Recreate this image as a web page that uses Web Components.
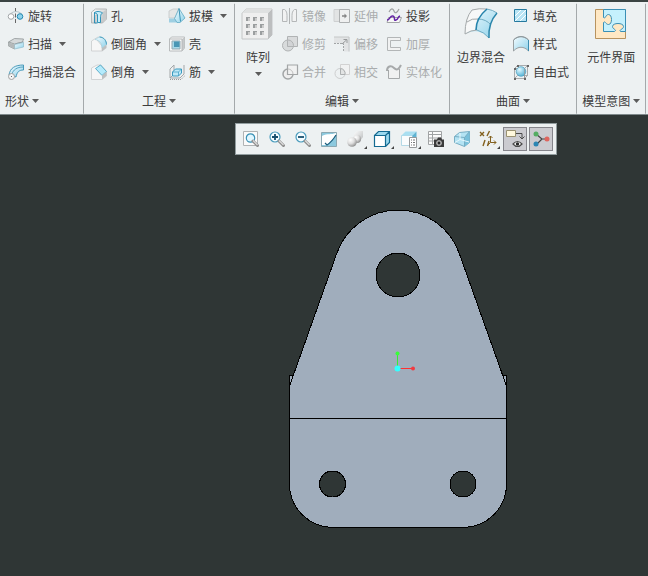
<!DOCTYPE html>
<html lang="zh-CN">
<head>
<meta charset="utf-8">
<title>零件</title>
<style>
    html, body { height: 100%; }
    body {
        margin: 0;
        display: flex;
        flex-direction: column;
        overflow: hidden;
        background: #2f3635;
        color: #3c3c3c;
        font: 12px/16px "Noto Sans CJK SC", sans-serif;
    }
</style>
</head>
<body>
<cad-ribbon>
    <ribbon-group label="形状" align="start">
        <ribbon-column>
            <ribbon-tool icon="revolve">旋转</ribbon-tool>
            <ribbon-tool icon="sweep" menu>扫描</ribbon-tool>
            <ribbon-tool icon="sweptblend">扫描混合</ribbon-tool>
        </ribbon-column>
    </ribbon-group>
    <ribbon-group label="工程">
        <ribbon-column>
            <ribbon-tool icon="hole">孔</ribbon-tool>
            <ribbon-tool icon="round" menu>倒圆角</ribbon-tool>
            <ribbon-tool icon="chamfer" menu>倒角</ribbon-tool>
        </ribbon-column>
        <ribbon-column>
            <ribbon-tool icon="draft" menu>拔模</ribbon-tool>
            <ribbon-tool icon="shell">壳</ribbon-tool>
            <ribbon-tool icon="rib" menu>筋</ribbon-tool>
        </ribbon-column>
    </ribbon-group>
    <ribbon-group label="编辑">
        <ribbon-tool icon="pattern" large menu>阵列</ribbon-tool>
        <ribbon-column>
            <ribbon-tool icon="mirror" disabled>镜像</ribbon-tool>
            <ribbon-tool icon="trim" disabled>修剪</ribbon-tool>
            <ribbon-tool icon="merge" disabled>合并</ribbon-tool>
        </ribbon-column>
        <ribbon-column>
            <ribbon-tool icon="extend" disabled>延伸</ribbon-tool>
            <ribbon-tool icon="offset" disabled>偏移</ribbon-tool>
            <ribbon-tool icon="intersect" disabled>相交</ribbon-tool>
        </ribbon-column>
        <ribbon-column>
            <ribbon-tool icon="project">投影</ribbon-tool>
            <ribbon-tool icon="thicken" disabled>加厚</ribbon-tool>
            <ribbon-tool icon="solidify" disabled>实体化</ribbon-tool>
        </ribbon-column>
    </ribbon-group>
    <ribbon-group label="曲面">
        <ribbon-tool icon="boundary" large>边界混合</ribbon-tool>
        <ribbon-column>
            <ribbon-tool icon="fill">填充</ribbon-tool>
            <ribbon-tool icon="style">样式</ribbon-tool>
            <ribbon-tool icon="freestyle">自由式</ribbon-tool>
        </ribbon-column>
    </ribbon-group>
    <ribbon-group label="模型意图">
        <ribbon-tool icon="component" large>元件界面</ribbon-tool>
    </ribbon-group>
</cad-ribbon>

<graphics-area>
    <view-toolbar slot="toolbar">
        <view-button icon="refit" label="重新调整"></view-button>
        <view-button icon="zoomin" label="放大"></view-button>
        <view-button icon="zoomout" label="缩小"></view-button>
        <view-button icon="repaint" label="重画"></view-button>
        <view-button icon="render" label="渲染选项" menu></view-button>
        <view-button icon="shading" label="显示样式" menu></view-button>
        <view-button icon="saved" label="已保存方向" menu></view-button>
        <view-button icon="manager" label="视图管理器"></view-button>
        <view-button icon="perspective" label="透视图"></view-button>
        <view-button icon="datum" label="基准显示过滤器" menu></view-button>
        <view-button icon="annotation" label="注释显示" pressed></view-button>
        <view-button icon="spin" label="旋转中心" pressed></view-button>
    </view-toolbar>
    <part-model></part-model>
</graphics-area>

<script>
// gradients shared by the icons; every icon svg carries its own copy
const DEFS = `
    <defs>
        <linearGradient id="b" x1="0" y1="0" x2="1" y2="1"><stop offset="0" stop-color="#f4fcff"/><stop offset="1" stop-color="#8fd2ea"/></linearGradient>
        <linearGradient id="g" x1="0" y1="0" x2="1" y2="1"><stop offset="0" stop-color="#fdfdfd"/><stop offset="1" stop-color="#b9bcbd"/></linearGradient>
        <radialGradient id="s" cx=".35" cy=".3" r=".75"><stop offset="0" stop-color="#fff"/><stop offset=".5" stop-color="#dedede"/><stop offset="1" stop-color="#8c8c8c"/></radialGradient>
        <radialGradient id="t" cx=".35" cy=".3" r=".75"><stop offset="0" stop-color="#e4f9ff"/><stop offset="1" stop-color="#4fb0d4"/></radialGradient>
    </defs>`;

const LENS = `<path d="M10 10l4.500 4.500" stroke="#8c8c8c" stroke-width="3" stroke-linecap="round"/><path d="M10 9.500l4.500 4.500" stroke="#dedede" stroke-width="1.200"/>`;

const ICONS = {
    revolve: `<path d="M7.500 0v16" stroke="#666" stroke-dasharray="4 1.500"/><path d="M2 6Q8 1 14 6" fill="none" stroke="#b9c6cb"/><circle cx="3" cy="8.500" r="2.800" fill="#fff" stroke="#a2a6a8"/><circle cx="12" cy="8.500" r="2.800" fill="#8fd3ec" stroke="#2589b0"/>`,
    sweep: `<path d="M.5 6l6-3.500 9 .5-1 3-6 1.500L6.500 9v4l-6-3z" fill="#d5d9da" stroke="#8f9597" stroke-width=".8"/><path d="M.5 6l6 2 9-2" fill="none" stroke="#8f9597" stroke-width=".8"/><path d="M6.500 8.500l9-2V11l-9 2z" fill="url(#b)" stroke="#8fbccc" stroke-width=".7"/><path d="M.5 6.500l6 2V13l-6-3z" fill="#b4b9ba"/>`,
    sweptblend: `<path d="M1 11C2 4 7 1 15.500 1v5C11 6 9 8 8 13z" fill="url(#b)" stroke="#3a91b3" stroke-width=".9"/><path d="M4 10C5 6 9 3 15 3" fill="none" stroke="#3a91b3" stroke-width=".8"/><circle cx="3.500" cy="12.500" r="3" fill="#f5f5f5" stroke="#a2a2a2"/><path d="M3 12.500h1" stroke="#666"/>`,
    hole: `<path d="M.5 4l4-3h11v10l-4 4h-3V7H5v8H.5z" fill="url(#g)" stroke="#a8acad" stroke-width=".8"/><path d="M11.500 4.500l4-3v10l-4 3z" fill="#c7cacb"/><path d="M3 5c2-2 6-2 8.500 0-2 1-2 2-2 9.500h-3V7c0-1-1-2-3.500-2z" fill="#c8eefa" stroke="#1f8ab4" stroke-width=".9"/><path d="M3.500 5v10h3" fill="none" stroke="#1f8ab4" stroke-width=".9"/>`,
    round: `<path d="M.5 5L7 1l4 1-5 2 5 6v5H.5z" fill="#f6f6f6" stroke="#c9cccd" stroke-width=".8"/><path d="M4 3.500L8.500 1c4.500 0 7 4 7 7.500L11 12c0-5-3-8-7-8.500z" fill="url(#b)" stroke="#9ccbdc" stroke-width=".6"/><path d="M8.500 1c4.500 0 7 4 7 7.500" fill="none" stroke="#3f9bbd"/><path d="M11 12l4.500-3.500V12L11 15.500z" fill="#bdc0c1"/>`,
    chamfer: `<path d="M.5 4L6 1h4l5.500 6.500V12L11 15.500H.500z" fill="#f6f6f6" stroke="#c9cccd" stroke-width=".8"/><path d="M4.500 4.500L9.500 1l6 6.500-4.500 4z" fill="#b4ebfc" stroke="#419fc0" stroke-width=".8"/><path d="M11 11.500l4.500-4V12L11 15.500z" fill="#bdc0c1"/>`,
    draft: `<path d="M0 3l4-2h6L6 10H0z" fill="#e4e6e6" stroke="#bfc2c3" stroke-width=".7"/><path d="M0 10.500h7l2 4H0z" fill="#9ecfe2"/><path d="M5.500 10.500L10 .5l6 9.500-5 4.500H8z" fill="url(#b)" stroke="#5fa9c4" stroke-width=".8"/><path d="M10 .5l1.500 13" stroke="#3992b4"/>`,
    shell: `<path d="M.5 3l2-2h13v11l-2.500 3H.5z" fill="#fafafa" stroke="#a9adae" stroke-width=".8"/><path d="M13 3l2.500-2v11L13 15z" fill="#c6c9ca"/><path d="M.5 3H13v12" fill="none" stroke="#b5b8b9"/><path d="M3 5h8v8H3z" fill="#a5d9ea" stroke="#95a9b1"/><path d="M5 5.500h5.500V11H5z" fill="#4a97b5"/>`,
    rib: `<path d="M1 14V5l4-4v9l-4 4h10l4-4V1" fill="#f0f0f0" fill-opacity=".5" stroke="#a2a7a9"/><path d="M3.500 12V8l3-3h6v4l-3 3z" fill="#bfe9f7" stroke="#3a9bc0"/><path d="M3.500 8h6v4M9.500 8l3-3" fill="none" stroke="#3a9bc0" stroke-width=".7"/><path d="M1 15.500h11l4-4" fill="none" stroke="#999" stroke-dasharray="1 1"/>`,
    mirror: `<path d="M.5 1.500l2 0c2 1 2.500 4 2.500 6v6H.5zM14.500 1.500h-2c-2 1-2.500 4-2.500 6v6h4.500z" fill="#f1f2f2" stroke="#b4b7b8"/><path d="M7.500 0v16" stroke="#b0b3b4"/>`,
    trim: `<path d="M5.500.5h10v10h-10z" fill="#d9dbdc" stroke="#b0b3b4"/><circle cx="6" cy="9.500" r="5.500" fill="#cfd2d3" fill-opacity=".7" stroke="#b0b3b4"/><path d="M5.500 4.500v6h6" fill="none" stroke="#b0b3b4"/>`,
    merge: `<circle cx="6" cy="10" r="5" fill="#eee" stroke="#a2a5a6" stroke-width="1.500"/><path d="M5.500 1h10v9.500h-10z" fill="#f0f1f1" stroke="#a2a5a6" stroke-width="1.200"/><path d="M6 5a5 5 0 0 1 5 5" fill="none" stroke="#c0c0c0"/>`,
    intersect: `<path d="M6.500.5h9v10h-9z" fill="#f1f2f2" stroke="#d2d2d2"/><circle cx="6" cy="9.500" r="5" fill="none" stroke="#cdcfd0"/><path d="M6.500 4.500v6H11a5 5 0 0 0-4.500-6z" fill="#e2e4e4" stroke="#adb0b1"/>`,
    extend: `<path d="M0 1.500h6v12H0z" fill="#e2e4e4" stroke="#ced0d1"/><path d="M5.500 1.500h10v13h-10z" fill="#eff0f0" stroke="#adb0b1"/><path d="M8 8h4" stroke="#858585" stroke-width="1.500"/><path d="M10.500 5.500L13 8l-2.500 2.500z" fill="#858585"/>`,
    offset: `<path d="M0 1h15.500v14.500H10V7H0z" fill="#e2e4e5"/><path d="M0 1h15v14.500" fill="none" stroke="#c4c7c8"/><path d="M0 7.500h9.500V16" fill="none" stroke="#a2a5a6" stroke-dasharray="2 1"/><path d="M8 8l4.500-4M9.500 3.500H13V7" fill="none" stroke="#989b9c"/>`,
    project: `<path d="M3 4c2-4 4-4 5-1s3 2 5-2" fill="none" stroke="#9ea1a2" stroke-width="1.200"/><path d="M1 14.500l1.500-5h13l-2 5z" fill="#f7f7f7" stroke="#a2a5a6"/><path d="M1 12c3 0 3-5 6-4s0 5 3 4 1-3 4-4" fill="none" stroke="#6524a8" stroke-width="1.500"/>`,
    thicken: `<path d="M14.500 1.500H1.500v13h13v-3h-10v-7h10z" fill="#f1f2f2" stroke="#b3b6b7"/>`,
    solidify: `<path d="M2.500 6v8.500h11V5" fill="#f0f1f1" stroke="#a6a9aa"/><path d="M1 7c0-5 4-6 7-3s5 1 7-3" fill="none" stroke="#a6a9aa" stroke-width="2"/>`,
    fill: `<path d="M1.500 1.500h12v12h-12z" fill="#b8e4f4" stroke="#25799f"/><path d="M2 8l6-6M2 13L13 2M7 13l6-6" stroke="#fff"/>`,
    style: `<path d="M.5 4C5-.5 11-.5 15.500 4v11C11 10 5 10 .5 15z" fill="url(#b)" stroke="#9aa0a2"/><path d="M.5 4C5-.5 11-.5 15.500 4" fill="none" stroke="#8b979c"/><path d="M15.500 4v11" stroke="#3b8db0"/>`,
    freestyle: `<path d="M1.500 4.500l3-3h10v10l-3 3h-10zM11.500 4.500v10M1.500 4.500h10l3-3M1.500 14.500l3-3h10" fill="none" stroke="#989b9c" stroke-width=".8"/><circle cx="8" cy="7.500" r="4.800" fill="url(#t)" stroke="#4e9ebd" stroke-width=".7"/><path d="M11.500 4.500v10" stroke="#989b9c" stroke-width=".8"/><path d="M1 4h2v2H1zM11 14h2v2h-2zM1 14h2v2H1zM14 1h2v2h-2zM4 1h2v2H4z" fill="#666"/>`,

    pattern: `<path d="M0 5l4-4h26v26l-4 4H0z" fill="#efefef" stroke="#c4c6c7"/><path d="M26 5l4-4v26l-4 4z" fill="#bcbebf"/><path d="M0 5l4-4h26l-4 4z" fill="#dfe1e1"/><path d="M4 9h4v4H4zm7 0h4v4h-4zm7 0h4v4h-4zM4 16h4v4H4zm7 0h4v4h-4zm7 0h4v4h-4zM4 23h4v4H4zm7 0h4v4h-4zm7 0h4v4h-4z" fill="#9b9e9f"/><path d="M6 10h2v3H6zm7 0h2v3h-2zm7 0h2v3h-2zM6 17h2v3H6zm7 0h2v3h-2zm7 0h2v3h-2zM6 24h2v3H6zm7 0h2v3h-2zm7 0h2v3h-2z" fill="#ccc"/>`,
    boundary: `<path d="M7 2Q22-1 32 5 23 15 24 30 14 19 0 26 0 10 7 2z" fill="url(#b)"/><path d="M7 2Q14 0 22 1 11 10 11 22 5 22 0 26 0 10 7 2z" fill="#f7f8f8"/><path d="M22 1Q14 0 7 2 0 10 0 26q6-4 12-4M2 14q5-4 11-3" fill="none" stroke="#a5a9aa"/><path d="M13 11q8 0 13 6M12 22q7 2 12 8M22 1q6 1 10 4" fill="none" stroke="#6fabc2"/><path d="M32 5Q23 15 24 30" fill="none" stroke="#2b86ab" stroke-width="1.500"/><path d="M22 1Q11 10 11 22" fill="none" stroke="#2684ac" stroke-width="1.600"/>`,
    component: `<path d="M.5 1.500h30v29H.5z" fill="#ffe8c4" stroke="#b8935f"/><path d="M8.500 1.500h22v22h-5c-2-2 3-2 3-5 0-4-11-4-11 0 0 3 5 3 2 5h-11v-9c2-2 2 2 5 2 4 0 4-10 0-10-3 0-3 5-5 3z" fill="#c5f1fd" stroke="#3b8fb5"/>`,

    refit: `<path d="M.5.5h14v14H.5z" fill="#fafafa" stroke="#b0b3b4"/><circle cx="7.500" cy="7" r="4.200" fill="#e2f7ff" stroke="#3a91b5" stroke-width="1.200"/>${LENS}`,
    zoomin: `<circle cx="6" cy="6" r="5" fill="#f5fcff" stroke="#4a9cbd" stroke-width="1.200"/><path d="M3 6h6M6 3v6" stroke="#174f6e" stroke-width="1.800"/>${LENS}`,
    zoomout: `<circle cx="6" cy="6" r="5" fill="#f5fcff" stroke="#4a9cbd" stroke-width="1.200"/><path d="M3 6h6" stroke="#174f6e" stroke-width="1.800"/>${LENS}`,
    repaint: `<path d="M.5 1.500h15v14H.5z" fill="#8cc9de" stroke="#8ba8b2"/><path d="M1 5c6-3 9-1 14-3v2c-3 4-6 8-9 10H1z" fill="#fff"/><path d="M15 4c-3 5-6 8-9 10l-2-2" fill="none" stroke="#1d5f7e" stroke-width="1.200"/>`,
    render: `<path d="M7 3l3-3h6v6l-3 4H7z" fill="url(#g)"/><circle cx="10" cy="8" r="4" fill="url(#s)"/><circle cx="5" cy="11" r="4.800" fill="url(#s)"/>`,
    shading: `<path d="M.5 4.500h11v11H.5z" fill="#fff"/><path d="M.5 4.500l4-4h11v11l-4 4v-11z" fill="#9bd8ee"/><path d="M.5 4.500h11v11H.5zl4-4h11v11l-4 4M11.500 4.500l4-4" fill="none" stroke="#146a91" stroke-width="1.200"/>`,
    saved: `<path d="M.5 4.500h11v10H.5z" fill="#fafcfd" stroke="#b4d9e6"/><path d="M.5 4.500l4-4h11l-4 4z" fill="#a9dff1"/><path d="M11.500 4.500l4-4V10h-4z" fill="#5fb3d2"/><path d="M8.500 6.500h7v10h-7z" fill="#fff" stroke="#96999b"/><path d="M10 9h1m1 0h2M10 11.500h1m1 0h2M10 14h1m1 0h2" stroke="#777"/>`,
    manager: `<path d="M.5.5h13v13H.5z" fill="#fcfcfc" stroke="#a0a3a4"/><path d="M.5 3.500h13M.5 7h13M.5 10h13M4.500.5v13" stroke="#a0a3a4"/><path d="M6 8.500h3l1-2h3l1 2h2V16H6z" fill="#3b3b3b"/><circle cx="11" cy="12" r="2.500" fill="#888" stroke="#ddd" stroke-width=".6"/><circle cx="11" cy="12" r="1.200" fill="#222"/>`,
    perspective: `<path d="M.5 5.500l5-4 10-1v11l-5 4-10-4z" fill="#b4e3f3" stroke="#78aec4"/><path d="M10.500 6.500l5-6v11l-5 4z" fill="#79c0da"/><path d="M.5 5.500l10 1v9M10.500 6.500l5-6" fill="none" stroke="#78aec4"/><path d="M1 11.500l5-3 9 2.500M6 8.500V2" fill="none" stroke="#e8f8fd"/>`,
    datum: `<path d="M0 1l4 4M4 1L0 5M9.500 0l-2.500 5M5 9l-2 6M9 10l-1.500 5" fill="none" stroke="#83611f" stroke-width="1.400"/><path d="M10.500 5v6.500H16M10.500 11.500L7 15M8.500 7l2-2 2 2M14 9.500l2 2-2 2" fill="none" stroke="#83611f"/>`,
    annotation: `<path d="M-2.500-.5h9v6h-9z" fill="#fff8dd" stroke="#9a9272"/><path d="M7 2.500h6v5M10.500 5.500L13 8l2.500-2.500" fill="none" stroke="#4b4b4b"/><path d="M4 13q4.500-5 9 0-4.500 5-9 0z" fill="#f7f7f7" stroke="#4b4b4b" stroke-width="1.200"/><circle cx="8.500" cy="13" r="1.700" fill="#2b2b2b"/>`,
    spin: `<path d="M1 3l6 5-6 6M7 8h6" fill="none" stroke="#444" stroke-width="1.200"/><circle cx="1" cy="3" r="2.500" fill="#55ad63"/><circle cx="12" cy="8" r="2.500" fill="#de655e"/><circle cx="1" cy="13" r="2.500" fill="#2b86b3"/>`
};

function icon(name, size) {
    return `<svg width="${size}" height="${size}" viewBox="0 0 ${size} ${size}" overflow="visible" aria-hidden="true">${DEFS}${ICONS[name]}</svg>`;
}

const CARET = `<svg class="caret" width="7" height="4" viewBox="0 0 7 4" aria-hidden="true"><path d="M0 0h7L3.500 4z" fill="#5b5b5b"/></svg>`;

class CadRibbon extends HTMLElement {
    constructor() {
        super();
        this.attachShadow({ mode: "open" });
        this.shadowRoot.innerHTML = `
            <style>
                :host {
                    display: flex;
                    flex: none;
                    padding-left: 1px;
                    border-top: 2px solid #3b4443;
                    border-bottom: 1px solid #7f898b;
                    background: #edf1f2;
                    white-space: nowrap;
                }
            </style>
            <slot></slot>
        `;
    }
}

class RibbonGroup extends HTMLElement {
    connectedCallback() {
        this.attachShadow({ mode: "open" });
        this.shadowRoot.innerHTML = `
            <style>
                :host {
                    display: flex;
                    flex-direction: column;
                    flex: none;
                    border-right: 1px solid #a4a9ab;
                    border-image: linear-gradient(transparent 2%, #a4a9ab 3%, #a4a9ab 98%, transparent) 1;
                }
                .tools {
                    display: flex;
                    justify-content: center;
                    gap: 8px;
                    height: 84px;
                    padding: 0 7px;
                }
                button {
                    display: flex;
                    align-items: center;
                    justify-content: center;
                    gap: 3px;
                    height: 28px;
                    padding: 2px 5px 0;
                    border: 0;
                    background: none;
                    color: inherit;
                    font: inherit;
                }
                :host([align="start"]) button { justify-content: flex-start; padding: 2px 4px 0; }
            </style>
            <div class="tools"><slot></slot></div>
            <button type="button">${this.getAttribute("label")}${CARET}</button>
        `;
    }
}

class RibbonColumn extends HTMLElement {
    constructor() {
        super();
        this.attachShadow({ mode: "open" });
        this.shadowRoot.innerHTML = `
            <style>
                :host {
                    display: grid;
                    grid-template-rows: repeat(3, 28px);
                    justify-items: start;
                }
            </style>
            <slot></slot>
        `;
    }
}

class RibbonTool extends HTMLElement {
    connectedCallback() {
        const large = this.hasAttribute("large");
        this.attachShadow({ mode: "open" });
        this.shadowRoot.innerHTML = `
            <style>
                :host { display: block; }
                button {
                    display: flex;
                    align-items: center;
                    gap: 4px;
                    height: 28px;
                    padding: 0;
                    border: 0;
                    background: none;
                    color: inherit;
                    font: inherit;
                }
                button:disabled { color: #a9acad; }
                .caret { margin-left: 3px; }
                :host([large]) button {
                    flex-direction: column;
                    gap: 7px;
                    height: 84px;
                    padding-top: 6px;
                    line-height: 20px;
                }
                :host([large]) .caret { margin: -2px 0 0; }
            </style>
            <button type="button" ${this.hasAttribute("disabled") ? "disabled" : ""}>
                ${icon(this.getAttribute("icon"), large ? 32 : 16)}
                <span><slot></slot></span>
                ${this.hasAttribute("menu") ? CARET : ""}
            </button>
        `;
    }
}

class GraphicsArea extends HTMLElement {
    constructor() {
        super();
        this.attachShadow({ mode: "open" });
        this.shadowRoot.innerHTML = `
            <style>
                :host {
                    display: flex;
                    flex: 1;
                    flex-direction: column;
                    align-items: center;
                    gap: 45px;
                    padding: 8px 0 0 144px;
                }
            </style>
            <slot name="toolbar"></slot>
            <slot></slot>
        `;
    }
}

class ViewToolbar extends HTMLElement {
    constructor() {
        super();
        this.attachShadow({ mode: "open" });
        this.shadowRoot.innerHTML = `
            <style>
                :host {
                    display: flex;
                    gap: 2px;
                    padding: 3px;
                    border: 1px solid #929d9f;
                    background: #edf1f2;
                }
            </style>
            <slot></slot>
        `;
    }
}

class ViewButton extends HTMLElement {
    connectedCallback() {
        const pressed = this.hasAttribute("pressed");
        this.attachShadow({ mode: "open" });
        this.shadowRoot.innerHTML = `
            <style>
                :host { display: block; }
                button {
                    display: flex;
                    align-items: center;
                    width: 24px;
                    height: 24px;
                    padding: 0 0 0 4px;
                    border: 0;
                    background: none;
                }
                :host([menu]) button { width: 25px; }
                :host([pressed]) button {
                    padding-left: 5px;
                    border: 1px solid #85858b;
                    background: #cbcbd0;
                }
                .corner { flex: none; align-self: flex-end; margin: 0 0 2px 1px; }
            </style>
            <button type="button" aria-label="${this.getAttribute("label")}" aria-pressed="${pressed}">
                ${icon(this.getAttribute("icon"), 16)}
                ${this.hasAttribute("menu") ? `<svg class="corner" width="3" height="3" aria-hidden="true"><path d="M3 0v3H0z" fill="#444"/></svg>` : ""}
            </button>
        `;
    }
}

class PartModel extends HTMLElement {
    constructor() {
        super();
        this.attachShadow({ mode: "open" });
        this.shadowRoot.innerHTML = `
            <style>
                :host { display: block; }
                svg { display: block; }
            </style>
            <svg width="224" height="336" viewBox="284 200 224 336" role="img" aria-label="支架">
                <g fill="#a0adbc" stroke="#000" shape-rendering="crispEdges">
                    <path d="M289.500 375.500h217V484a43.500 43.500 0 0 1-43.500 43.500H333A43.500 43.500 0 0 1 289.500 484z"/>
                    <path d="M289.500 386L336.500 254A65 65 0 0 1 459.500 254L506.500 386V418.500H289.500z"/>
                </g>
                <g fill="#2f3635" stroke="#000" shape-rendering="crispEdges">
                    <circle cx="398" cy="275" r="22"/>
                    <circle cx="332.500" cy="484" r="13"/>
                    <circle cx="463" cy="484" r="13"/>
                </g>
                <path d="M397.500 368V353" stroke="#38e838"/>
                <path d="M400 368.500H412" stroke="#ff3030"/>
                <circle cx="397.500" cy="353.500" r="2" fill="#38ff38"/>
                <circle cx="413" cy="368.500" r="2" fill="#f03a40"/>
                <circle cx="397.500" cy="368.500" r="3" fill="#35ffff"/>
            </svg>
        `;
    }
}

customElements.define("cad-ribbon", CadRibbon);
customElements.define("ribbon-group", RibbonGroup);
customElements.define("ribbon-column", RibbonColumn);
customElements.define("ribbon-tool", RibbonTool);
customElements.define("graphics-area", GraphicsArea);
customElements.define("view-toolbar", ViewToolbar);
customElements.define("view-button", ViewButton);
customElements.define("part-model", PartModel);
</script>
</body>
</html>
